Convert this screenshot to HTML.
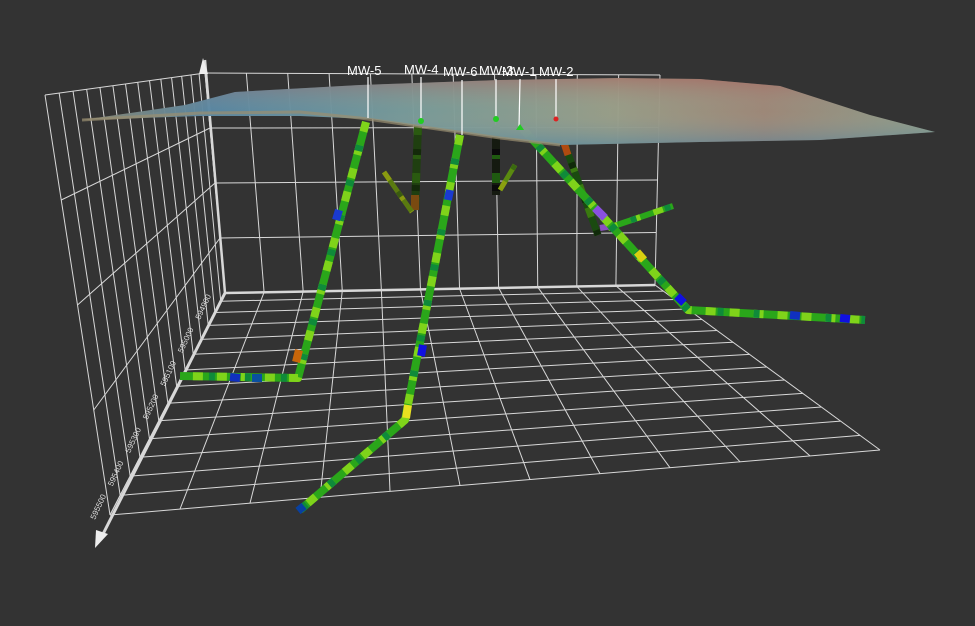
<!DOCTYPE html>
<html><head><meta charset="utf-8"><style>
html,body{margin:0;padding:0;background:#333333;width:975px;height:626px;overflow:hidden}
svg{display:block}
text{font-family:"Liberation Sans",sans-serif}
</style></head><body>
<svg id="s" width="975" height="626" viewBox="0 0 975 626" xmlns="http://www.w3.org/2000/svg">
<defs>
<linearGradient id="surf" x1="0" y1="0" x2="1" y2="0">
<stop offset="0" stop-color="#8a8670"/>
<stop offset="0.15" stop-color="#5a88a4"/>
<stop offset="0.4" stop-color="#7b9d9a"/>
<stop offset="0.62" stop-color="#9aa08a"/>
<stop offset="0.8" stop-color="#a08a7a"/>
<stop offset="1" stop-color="#8fa08e"/>
</linearGradient>
<linearGradient id="surf2" x1="0" y1="0" x2="0" y2="1">
<stop offset="0" stop-color="#b05050" stop-opacity="0.4"/>
<stop offset="0.5" stop-color="#a0a090" stop-opacity="0"/>
<stop offset="1" stop-color="#3f7fa8" stop-opacity="0.45"/>
</linearGradient>
</defs>
<g id="grid" stroke="#d8d8d8" stroke-width="1" fill="none"></g>
<g id="wellsBack"></g>
<g id="wells"></g>
<polygon points="82,120 185,105 235,92 360,85 500,80 620,78 700,79 780,86 870,115 935,132 820,140 700,142 560,145 500,138 430,128 370,119 300,116 200,116" fill="url(#surf)" opacity="0.97"/>
<polygon points="82,120 185,105 235,92 360,85 500,80 620,78 700,79 780,86 870,115 935,132 820,140 700,142 560,145 500,138 430,128 370,119 300,116 200,116" fill="url(#surf2)"/>
<polyline points="82,120 200,113 300,112 360,118 430,128 500,138 560,145" fill="none" stroke="#9a8f70" stroke-width="3" opacity="0.7"/>
<g stroke="#fff" stroke-width="1.2">
<line x1="368" y1="77" x2="368" y2="118"/>
<line x1="421" y1="77" x2="421" y2="120"/>
<line x1="462" y1="80" x2="462" y2="135"/>
<line x1="496" y1="79" x2="496" y2="118"/>
<line x1="520" y1="79" x2="519" y2="128"/>
<line x1="556" y1="79" x2="556" y2="118"/>
</g>
<circle cx="421" cy="121" r="3" fill="#2c2"/>
<circle cx="496" cy="119" r="3" fill="#2c2"/>
<polygon points="516,130 520,124 524,130" fill="#2c2"/>
<circle cx="556" cy="119" r="2.5" fill="#d22"/>
<g fill="#fff" font-size="13">
<text x="347" y="75">MW-5</text>
<text x="404" y="74">MW-4</text>
<text x="443" y="76">MW-6</text>
<text x="479" y="75">MW-3</text>
<text x="502" y="76">MW-1</text>
<text x="539" y="76">MW-2</text>
</g>
</svg>
<script>
const NS="http://www.w3.org/2000/svg";
const g=document.getElementById('grid');
function L(x1,y1,x2,y2,w){const l=document.createElementNS(NS,'line');l.setAttribute('x1',x1);l.setAttribute('y1',y1);l.setAttribute('x2',x2);l.setAttribute('y2',y2);if(w)l.setAttribute('stroke-width',w);g.appendChild(l);}
function lerp(a,b,t){return [a[0]+(b[0]-a[0])*t,a[1]+(b[1]-a[1])*t];}
const BL=[225,293],BR=[655,285],FL=[110,515],FR=[880,450];
const WTL=[205,73],WTR=[660,75],LT=[45,95];
const n=11,m=14;
for(let i=0;i<=n;i++){const a=lerp(BL,BR,i/n),b=lerp(FL,FR,i/n);L(a[0],a[1],b[0],b[1]);}
for(let j=0;j<=m;j++){const t=j/m;const tt=Math.pow(t,1.25);const a=lerp(BL,FL,tt),b=lerp(BR,FR,tt);L(a[0],a[1],b[0],b[1]);}
for(let i=0;i<=n;i++){const a=lerp(WTL,WTR,i/n),b=lerp(BL,BR,i/n);L(a[0],a[1],b[0],b[1]);}
for(let j=0;j<=4;j++){const a=lerp(WTL,BL,j/4),b=lerp(WTR,BR,j/4);L(a[0],a[1],b[0],b[1]);}
for(let j=0;j<=m;j++){const tt=Math.pow(j/m,1.25);const a=lerp(WTL,LT,tt),b=lerp(BL,FL,tt);L(a[0],a[1],b[0],b[1]);}
for(let j=0;j<=4;j++){const a=lerp(WTL,BL,j/4),b=lerp(LT,FL,j/4);L(a[0],a[1],b[0],b[1]);}
L(225,293,655,285,2.5);L(225,293,100,540,3);L(205,60,225,293,2.5);
const ar=document.createElementNS(NS,'polygon');ar.setAttribute('points','95,548 96,530 108,534');ar.setAttribute('fill','#eee');document.getElementById('s').insertBefore(ar,g.nextSibling);
const ar2=document.createElementNS(NS,'polygon');ar2.setAttribute('points','203,58 199,74 208,74');ar2.setAttribute('fill','#eee');document.getElementById('s').insertBefore(ar2,g.nextSibling);
const labs=["595500","595400","595300","595200","595100","595000","594900"];
labs.forEach((t,i)=>{const p=lerp([95,520],[200,320],i/6);const tx=document.createElementNS(NS,'text');tx.setAttribute('x',p[0]);tx.setAttribute('y',p[1]);tx.setAttribute('fill','#ddd');tx.setAttribute('font-size','8');tx.setAttribute('stroke','none');tx.setAttribute('transform','rotate(-65 '+p[0]+' '+p[1]+')');tx.textContent=t;g.appendChild(tx);});
function well(pts,segs,parent,w,base,c1,c2){
 const P=document.getElementById(parent);
 const pl=document.createElementNS(NS,'polyline');pl.setAttribute('points',pts.map(p=>p.join(',')).join(' '));
 pl.setAttribute('fill','none');pl.setAttribute('stroke',base||'#2aa61a');pl.setAttribute('stroke-width',w||8);pl.setAttribute('stroke-linejoin','round');P.appendChild(pl);
 const p2=pl.cloneNode();p2.setAttribute('stroke',c1||'#7fd31a');p2.setAttribute('stroke-dasharray','10 14');P.appendChild(p2);
 const p3=pl.cloneNode();p3.setAttribute('stroke',c2||'#0f8a3a');p3.setAttribute('stroke-dasharray','6 30');p3.setAttribute('stroke-dashoffset','12');P.appendChild(p3);
 segs.forEach(s=>{const l=document.createElementNS(NS,'line');l.setAttribute('x1',s[0]);l.setAttribute('y1',s[1]);l.setAttribute('x2',s[2]);l.setAttribute('y2',s[3]);l.setAttribute('stroke',s[4]);l.setAttribute('stroke-width',w||8);P.appendChild(l);});
}
well([[418,125],[415,210]],[[415,195,415,210,'#7a4a10']],'wellsBack',8,'#1f3f10','#2a5a10','#142a0a');
well([[496,125],[496,195]],[],'wellsBack',8,'#151a10','#1f5a10','#0a0a0a');
well([[384,172],[400,195],[412,212]],[],'wellsBack',5,'#5a7a10','#8a9a10','#3a5a10');
well([[500,190],[515,165]],[],'wellsBack',5,'#5a8a10','#8aa010','#3a6a10');
well([[563,140],[598,235]],[[563,140,568,155,'#b04a10']],'wellsBack',7,'#1a4a10','#3a7a10','#102a0a');
well([[608,228],[673,206]],[[600,228,612,226,'#8a50c0']],'wellsBack',6);
well([[366,122],[298,378],[180,376]],[[339,210,336,220,'#1a3ad0'],[299,350,296,362,'#c8660a'],[230,377,240,378,'#1030c0'],[252,378,262,378,'#0a50a0']],'wells',8);
well([[460,135],[405,420],[300,510]],[[450,190,448,200,'#1a3ad0'],[423,345,421,356,'#1010e0'],[408,405,406,418,'#e8e020'],[304,506,298,511,'#0840a0']],'wells',8);
well([[522,128],[688,310],[865,320]],[[595,208,605,218,'#8a50e0'],[637,252,644,260,'#d8d010'],[677,296,684,303,'#1010e0'],[790,315,800,316,'#1030c0'],[840,318,850,319,'#1010e0']],'wells',8);
</script>
</body></html>
